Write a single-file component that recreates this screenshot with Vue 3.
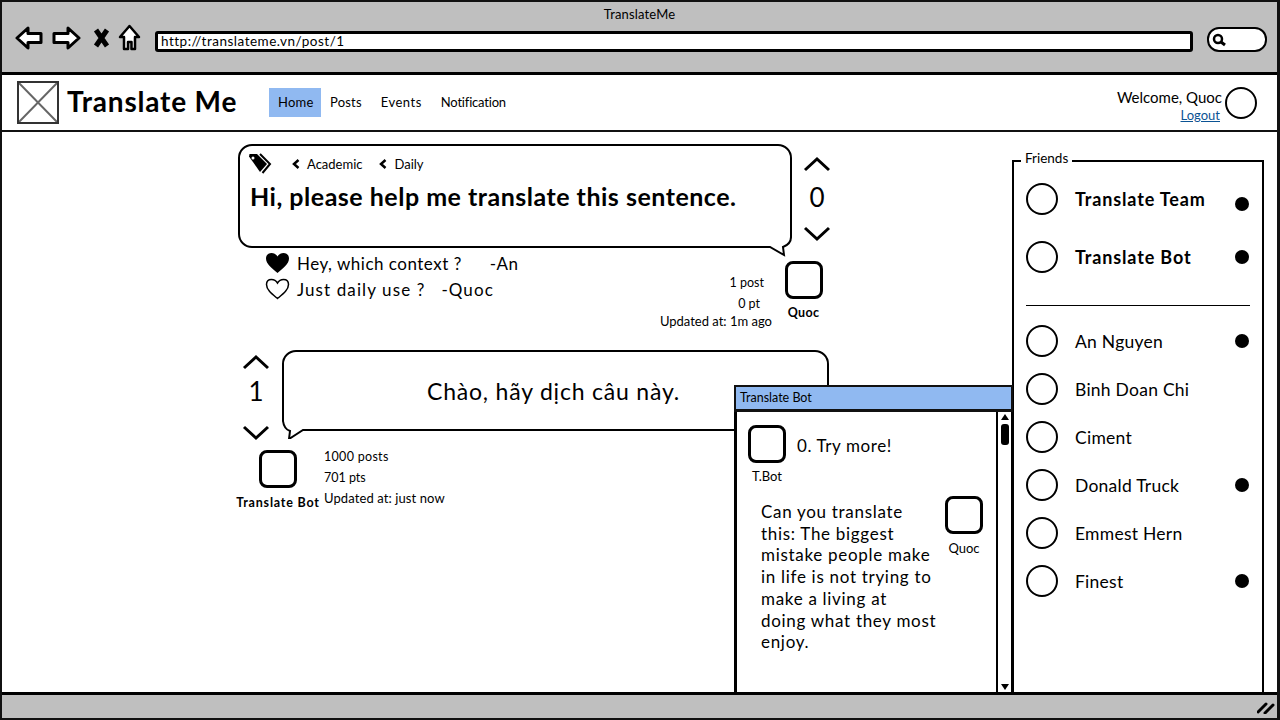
<script setup>
const friendsTop = [
  { name: 'Translate Team', dot: true, low: true },
  { name: 'Translate Bot', dot: true }
]
const friends = [
  { name: 'An Nguyen', dot: true },
  { name: 'Binh Doan Chi' },
  { name: 'Ciment' },
  { name: 'Donald Truck', dot: true },
  { name: 'Emmest Hern' },
  { name: 'Finest', dot: true }
]
</script>

<template>
  <div class="frame">
    <header class="chrome">
      <div class="title">TranslateMe</div>
      <div class="toolbar">
        <svg class="tool back" width="28" height="24" viewBox="0 0 28 24"><path d="M13 2 2 12l11 10v-5.500h13V7.500H13z" fill="#fff" stroke="#000" stroke-width="3" stroke-linejoin="round"/></svg>
        <svg class="tool fwd" width="29" height="24" viewBox="0 0 29 24"><path d="M16 2l11 10-11 10v-5.500H2V7.500h14z" fill="#fff" stroke="#000" stroke-width="3" stroke-linejoin="round"/></svg>
        <svg class="tool x" width="17" height="20" viewBox="0 0 17 20"><path d="M3 2l11 16M14 2 3 18" fill="none" stroke="#000" stroke-width="5"/></svg>
        <svg class="tool home" width="23" height="27" viewBox="0 0 23 27"><path d="M11.500 2 2 13h4v12h4v-7h3.500v7H17V13h4z" fill="#fff" stroke="#000" stroke-width="2.500" stroke-linejoin="round"/></svg>
        <div class="address">http://translateme.vn/post/1</div>
        <div class="search">
          <svg width="16" height="14" viewBox="0 0 16 14"><circle cx="7" cy="6" r="4" fill="none" stroke="#000" stroke-width="2.500"/><path d="M10 9l4 3" stroke="#000" stroke-width="3"/></svg>
        </div>
      </div>
    </header>

    <nav class="nav">
      <div class="logo">
        <svg width="38" height="39" viewBox="0 0 38 39"><path d="M0 0l38 39M38 0 0 39" stroke="#666" stroke-width="2"/></svg>
      </div>
      <div class="brand">Translate Me</div>
      <div class="links">
        <span class="link active">Home</span>
        <span class="link">Posts</span>
        <span class="link events">Events</span>
        <span class="link notif">Notification</span>
      </div>
      <div class="user">
        <div class="user-text">
          <div>Welcome, Quoc</div>
          <a class="logout">Logout</a>
        </div>
        <span class="circle user-circle"></span>
      </div>
    </nav>

    <main class="main">
      <section class="posts">
        <article class="post-one">
          <div class="bubble bubble-one">
            <div class="tags">
              <svg class="tag-icon" width="26" height="22" viewBox="0 0 26 22"><path d="M1 3.500 1.500 1H9l10 10-7 8z" fill="#000"/><path d="M12 1l10 10-7.500 9" fill="none" stroke="#000" stroke-width="2"/><circle cx="5" cy="5" r="1.500" fill="#fff"/></svg>
              <span class="tag first"><svg width="8" height="10" viewBox="0 0 8 10"><path d="M6.500 1 2 5l4.500 4" fill="none" stroke="#000" stroke-width="2.500"/></svg>Academic</span>
              <span class="tag"><svg width="8" height="10" viewBox="0 0 8 10"><path d="M6.500 1 2 5l4.500 4" fill="none" stroke="#000" stroke-width="2.500"/></svg>Daily</span>
            </div>
            <div class="headline">Hi, please help me translate this sentence.</div>
            <svg class="tail tail-right" width="26" height="26" viewBox="0 0 26 26"><path d="M0 16H4L18 24 17 16Q25 13 25 6V0H0z" fill="#fff"/><path d="M0 16H4L18 24 17 16Q25 13 25 6V0" fill="none" stroke="#000" stroke-width="2"/></svg>
          </div>
          <div class="vote vote-right">
            <svg width="28" height="16" viewBox="0 0 28 16"><path d="M2 14 14 3l12 11" fill="none" stroke="#000" stroke-width="3"/></svg>
            <span class="score">0</span>
            <svg width="28" height="16" viewBox="0 0 28 16"><path d="M2 2l12 11L26 2" fill="none" stroke="#000" stroke-width="3"/></svg>
          </div>
          <div class="post-foot">
            <div class="comments">
              <div class="comment">
                <svg width="25" height="22" viewBox="0 0 25 22"><path d="M12.500 21C7 16 1 12 1 6.500 1 3 3.500 1 6.500 1c2.500 0 4.500 1 6 3.500C14 2 16 1 18.500 1 21.500 1 24 3 24 6.500 24 12 18 16 12.500 21z" fill="#000"/></svg>
                <span>Hey, which context ?</span><span class="author-one">-An</span>
              </div>
              <div class="comment wide">
                <svg width="25" height="22" viewBox="0 0 25 22"><path d="M12.500 20.500C7 16 1.500 12 1.500 6.500c0-3 2-5 5-5 2.500 0 4.500 1 6 3.500 1.500-2.500 3.500-3.500 6-3.500 3 0 5 2 5 5 0 5.500-5.500 9.500-11 14z" fill="#fff" stroke="#000" stroke-width="1.500"/></svg>
                <span>Just daily use ?</span><span class="author-two">-Quoc</span>
              </div>
            </div>
            <div class="stats stats-right">
              <span class="s-post">1 post</span>
              <span class="s-pt">0 pt</span>
              <span class="s-upd">Updated at: 1m ago</span>
            </div>
            <div class="person">
              <span class="avatar"></span>
              <span class="person-name">Quoc</span>
            </div>
          </div>
        </article>

        <article class="post-two">
          <div class="vote vote-left">
            <svg width="28" height="16" viewBox="0 0 28 16"><path d="M2 14 14 3l12 11" fill="none" stroke="#000" stroke-width="3"/></svg>
            <span class="score">1</span>
            <svg width="28" height="16" viewBox="0 0 28 16"><path d="M2 2l12 11L26 2" fill="none" stroke="#000" stroke-width="3"/></svg>
          </div>
          <div class="bubble bubble-two">
            <span class="greeting">Chào, hãy dịch câu này.</span>
            <svg class="tail tail-left" width="24" height="24" viewBox="0 0 24 24"><path d="M1 0V6Q2 14 8 16L7 24 21 15H24V0z" fill="#fff"/><path d="M1 0V6Q2 14 8 16L7 24 21 15H24" fill="none" stroke="#000" stroke-width="2"/></svg>
          </div>
          <div class="post-two-foot">
            <div class="person bot">
              <span class="avatar"></span>
              <span class="person-name">Translate Bot</span>
            </div>
            <div class="stats stats-left">
              <span>1000 posts</span>
              <span>701 pts</span>
              <span class="s-upd-left">Updated at: just now</span>
            </div>
          </div>
        </article>
      </section>

      <aside class="friends">
        <span class="legend">Friends</span>
        <div v-for="f in friendsTop" :key="f.name" class="friend strong">
          <span class="circle"></span>
          <span class="friend-name">{{ f.name }}</span>
          <span v-if="f.dot" class="dot" :class="{ low: f.low }"></span>
        </div>
        <hr class="rule" />
        <div v-for="f in friends" :key="f.name" class="friend plain">
          <span class="circle"></span>
          <span class="friend-name">{{ f.name }}</span>
          <span v-if="f.dot" class="dot"></span>
        </div>
      </aside>

      <div class="chat">
        <div class="chat-head">Translate Bot</div>
        <div class="chat-body">
          <div class="chat-content">
            <div class="msg-one">
              <div class="person small">
                <span class="avatar"></span>
                <span class="small-name">T.Bot</span>
              </div>
              <span class="msg-one-text">0. Try more!</span>
            </div>
            <div class="msg-two">
              <p class="msg-two-text">Can you translate<br />this: The biggest<br />mistake people make<br />in life is not trying to<br />make a living at<br />doing what they most<br />enjoy.</p>
              <div class="person small">
                <span class="avatar"></span>
                <span class="small-name">Quoc</span>
              </div>
            </div>
          </div>
          <div class="scrollbar">
            <svg width="10" height="8" viewBox="0 0 10 8"><path d="M5 1l4 6H1z" fill="#000"/></svg>
            <span class="thumb"></span>
            <svg class="down" width="10" height="8" viewBox="0 0 10 8"><path d="M5 7 9 1H1z" fill="#000"/></svg>
          </div>
        </div>
      </div>
    </main>

    <footer class="status">
      <svg width="18" height="14" viewBox="0 0 18 14"><path d="M1 12 9 4M8 13l8-8" stroke="#000" stroke-width="3" stroke-linecap="round"/></svg>
    </footer>
  </div>
</template>

<style>
html, body { margin: 0; background: #fff; }
</style>

<style scoped>
.frame {
  width: 1280px;
  height: 720px;
  box-sizing: border-box;
  border: 2px solid #111;
  border-right-width: 3px;
  display: flex;
  flex-direction: column;
  font-family: "Lato", "Noto Sans", sans-serif;
  color: #000;
  overflow: hidden;
  background: #fff;
}
.chrome {
  height: 70px;
  background: #bfbfbf;
  border-bottom: 3px solid #000;
  flex: none;
  box-sizing: content-box;
}
.title {
  text-align: center;
  font-size: 13px;
  line-height: 16px;
  padding-top: 4px;
  letter-spacing: 0.15px;
}
.toolbar {
  display: flex;
  align-items: center;
  height: 27px;
  margin-top: 2px;
  padding-left: 13px;
}
.tool { flex: none; }
.fwd { margin-left: 9px; }
.x { margin-left: 12px; }
.home { margin-left: 8px; }
.address {
  margin-left: 14px;
  width: 1026px;
  height: 13px;
  padding: 1px 3px;
  background: #fff;
  border: 3px solid #000;
  border-radius: 3px;
  font-size: 13.5px;
  line-height: 13px;
  letter-spacing: 0.5px;
  margin-top: 7px;
}
.search {
  margin-left: 14px;
  width: 54px;
  height: 21px;
  background: #fff;
  border: 2px solid #000;
  border-radius: 12px;
  display: flex;
  align-items: center;
  padding-left: 2px;
  margin-top: 4px;
}
.nav {
  height: 55px;
  flex: none;
  display: flex;
  align-items: center;
  border-bottom: 2px solid #111;
  padding-left: 15px;
}
.logo {
  width: 38px;
  height: 39px;
  border: 2px solid #333;
  flex: none;
}
.logo svg { display: block; }
.brand {
  margin-left: 8px;
  margin-top: -3px;
  font-size: 28px;
  font-weight: 700;
  letter-spacing: 0.8px;
  line-height: 32px;
  width: 202px;
}
.links { display: flex; align-items: center; }
.link {
  font-size: 13px;
  line-height: 29px;
  padding: 0 9px;
  margin-right: 1px;
  letter-spacing: 0.2px;
}
.events { letter-spacing: 0.5px; }
.notif { letter-spacing: -0.2px; }
.active {
  background: #90b9f1;
  width: 34px;
  text-align: center;
  margin-right: 0;
}
.user {
  margin-left: auto;
  display: flex;
  align-items: center;
  padding-right: 20px;
}
.user-text {
  text-align: right;
  font-size: 15px;
  line-height: 17px;
  margin-top: 7px;
}
.logout {
  display: inline-block;
  color: #0b5394;
  text-decoration: underline;
  font-size: 13px;
  padding-right: 2px;
}
.circle {
  display: block;
  flex: none;
  width: 28px;
  height: 28px;
  border: 2px solid #000;
  border-radius: 50%;
  background: #fff;
}
.user-circle { margin-left: 3px; }
.main {
  position: relative;
  flex: 1;
  min-height: 0;
  display: flex;
  justify-content: space-between;
}
.posts {
  margin-left: 236px;
  padding-top: 12px;
  width: 610px;
}
.post-one {
  display: grid;
  grid-template-columns: 554px 50px;
}
.bubble {
  position: relative;
  box-sizing: border-box;
  border: 2px solid #000;
  border-radius: 14px;
  background: #fff;
}
.bubble-one {
  height: 104px;
  padding: 7px 10px;
}
.tags {
  display: flex;
  align-items: center;
  height: 22px;
  font-size: 13px;
}
.tag-icon { margin-left: -2px; }
.tag { display: flex; align-items: center; gap: 7px; margin-left: 17px; }
.tag.first { margin-left: 18px; }
.headline {
  font-size: 25px;
  font-weight: 700;
  line-height: 30px;
  margin-top: 6px;
  letter-spacing: 0.5px;
  white-space: nowrap;
}
.tail { position: absolute; display: block; }
.tail-right { right: -2px; bottom: -11px; }
.tail-left { left: -2px; bottom: -10px; }
.vote {
  display: flex;
  flex-direction: column;
  align-items: center;
}
.vote-right { padding-top: 12px; }
.score {
  font-size: 26px;
  line-height: 30px;
  height: 30px;
  margin: 10px 0 14px;
}
.post-foot {
  grid-column: 1 / 3;
  display: flex;
  height: 82px;
  margin-top: 2px;
}
.comments {
  padding: 0 0 0 27px;
  flex: 1;
}
.comment {
  display: flex;
  align-items: center;
  height: 26px;
  font-size: 17px;
  letter-spacing: 0.5px;
}
.comment.wide { letter-spacing: 1.1px; }
.comment svg { margin-right: 7px; flex: none; }
.author-one { margin-left: 28px; }
.author-two { margin-left: 16px; }
.stats {
  display: flex;
  flex-direction: column;
  font-size: 12.5px;
}
.stats-right {
  align-items: flex-end;
  padding-top: 22px;
  margin-right: 13px;
}
.stats-right span { line-height: 21px; }
.s-post { margin-right: 8px; }
.s-pt { margin-right: 12px; }
.stats-right .s-upd { line-height: 14px; font-size: 13px; }
.s-upd-left { font-size: 13px; letter-spacing: 0.1px; }
.person {
  display: flex;
  flex-direction: column;
  align-items: center;
  flex: none;
}
.post-foot > .person { width: 37px; margin-right: 20px; padding-top: 11px; }
.avatar {
  display: block;
  box-sizing: border-box;
  width: 38px;
  height: 38px;
  border: 3px solid #000;
  border-radius: 8px;
}
.person-name {
  font-size: 12.5px;
  font-weight: 700;
  margin-top: 6px;
  line-height: 16px;
  white-space: nowrap;
  letter-spacing: 0.3px;
}
.post-two {
  display: grid;
  grid-template-columns: 36px 547px;
  column-gap: 8px;
  margin-top: 18px;
}
.vote-left { padding-top: 4px; }
.vote-left .score { margin: 6px 0 19px; }
.bubble-two {
  height: 81px;
  display: flex;
  align-items: center;
  justify-content: center;
}
.greeting {
  font-size: 23px;
  letter-spacing: 0.8px;
  margin-right: 4px;
}
.post-two-foot {
  grid-column: 1 / 3;
  display: flex;
  margin-top: 9px;
}
.bot { width: 80px; }
.bot .person-name { letter-spacing: 0.8px; margin-top: 7px; }
.stats-left {
  margin-left: 6px;
  margin-top: -4px;
}
.stats-left span { line-height: 21px; }
.stats-left span:first-child { letter-spacing: 0.3px; }
.friends {
  position: relative;
  box-sizing: border-box;
  width: 252px;
  height: 532px;
  margin: 28px 13px 0 0;
  border: 2px solid #000;
  border-bottom: none;
  padding: 21px 13px 0 12px;
}
.legend {
  position: absolute;
  left: 7px;
  top: -12px;
  padding: 0 4px;
  background: #fff;
  font-size: 13.5px;
  line-height: 16px;
}
.friend {
  display: flex;
  align-items: center;
  height: 32px;
}
.friend.strong { margin-bottom: 26px; }
.friend.strong .friend-name { font-weight: 700; font-size: 18px; letter-spacing: 0.85px; }
.friend.plain { margin-bottom: 16px; }
.friend-name {
  margin-left: 17px;
  font-size: 17.5px;
  letter-spacing: 0.25px;
  white-space: nowrap;
}
.dot {
  margin-left: auto;
  width: 14px;
  height: 14px;
  border-radius: 50%;
  background: #000;
}
.dot.low { margin-top: 10px; }
.rule {
  margin: 32px -1px 19px 0;
  border: none;
  border-top: 1.500px solid #000;
  height: 0;
  width: 224px;
}
.chat {
  position: absolute;
  left: 732px;
  top: 253px;
  width: 279px;
  height: 307px;
  background: #fff;
  display: flex;
  flex-direction: column;
}
.chat-head {
  box-sizing: border-box;
  height: 27px;
  background: #90b9f1;
  border: 2px solid #111;
  border-bottom-width: 3px;
  padding: 0 4px;
  font-size: 12.5px;
  line-height: 22px;
  flex: none;
}
.chat-body {
  flex: 1;
  display: flex;
  border-left: 3px solid #000;
  border-right: 2px solid #000;
  min-height: 0;
}
.chat-content {
  flex: 1;
  min-width: 0;
  padding: 13px 0 0 11px;
}
.msg-one {
  display: flex;
  height: 66px;
}
.person.small { width: 38px; }
.small-name {
  font-size: 13px;
  line-height: 14px;
  margin-top: 6px;
  white-space: nowrap;
}
.msg-two .small-name { margin-top: 7px; }
.msg-one-text {
  margin-left: 11px;
  margin-top: 10px;
  font-size: 17px;
  line-height: 22px;
  letter-spacing: 0.6px;
}
.msg-two {
  display: flex;
  padding-left: 13px;
}
.msg-two-text {
  margin: 10px 0 0;
  font-size: 17px;
  line-height: 21.700px;
  width: 184px;
  letter-spacing: 0.7px;
  white-space: nowrap;
}
.msg-two .person { margin-top: 5px; }
.scrollbar {
  box-sizing: border-box;
  width: 15px;
  flex: none;
  border-left: 2px solid #000;
  display: flex;
  flex-direction: column;
  align-items: center;
  padding: 1px 0;
}
.thumb {
  display: block;
  width: 8px;
  height: 21px;
  border-radius: 3px;
  background: #000;
  margin-top: 3px;
}
.down { margin-top: auto; }
.status {
  height: 23px;
  flex: none;
  background: #bfbfbf;
  border-top: 3px solid #000;
  display: flex;
  align-items: center;
  justify-content: flex-end;
  padding-right: 2px;
  position: relative;
  z-index: 2;
}
</style>
